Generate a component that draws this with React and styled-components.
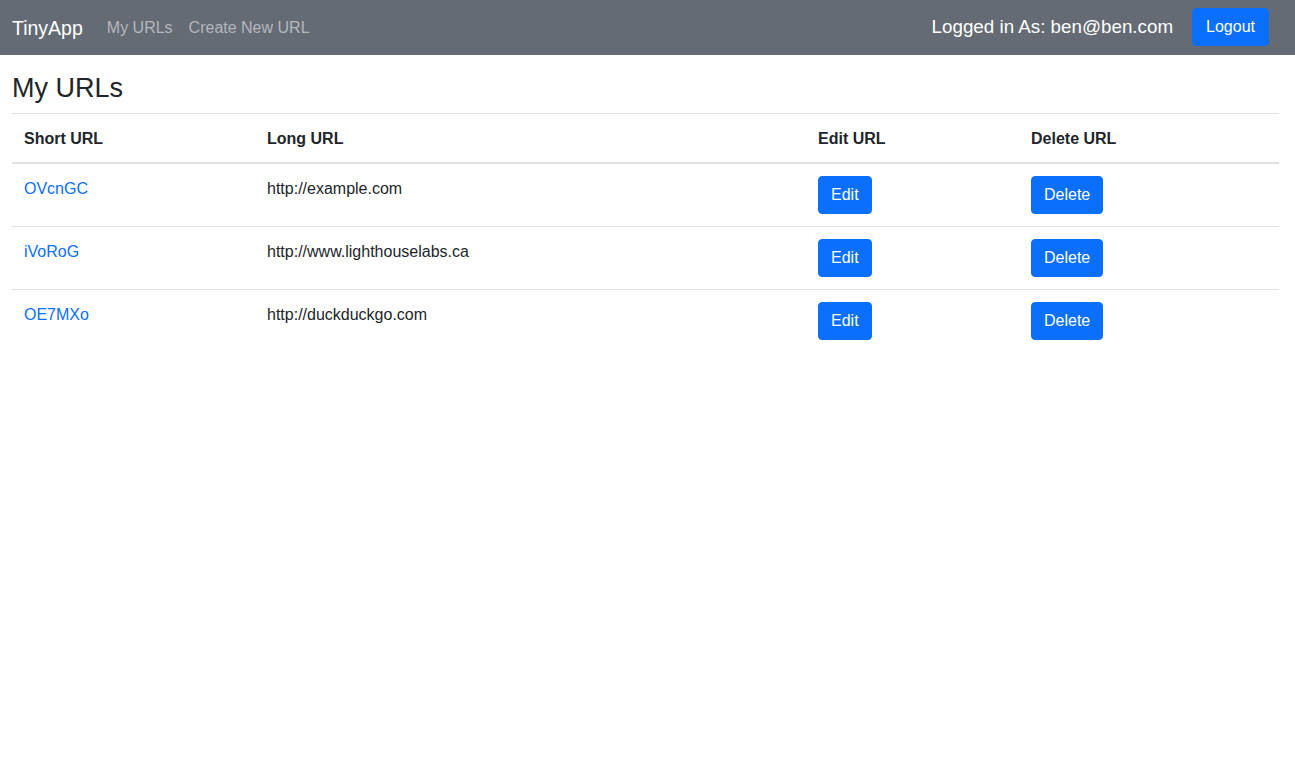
import React from "react";
import styled, { createGlobalStyle } from "styled-components";

const GlobalStyle = createGlobalStyle`
  html, body { margin: 0; padding: 0; background: #fff; }
  body {
    font-family: "Liberation Sans", Arial, sans-serif;
    font-size: 16px;
    line-height: 1.5;
    color: #212529;
  }
  * { box-sizing: border-box; }
`;

const Navbar = styled.nav`
  height: 55px;
  background: #656b74;
  display: flex;
  align-items: center;
  padding: 0 26px 2px 12px;
`;

const Brand = styled.a`
  font-size: 19.5px;
  color: #fff;
  text-decoration: none;
  margin-right: 16px;
  line-height: 30px;
  padding-top: 2px;
`;

const NavLink = styled.a`
  color: #b3b7bc;
  text-decoration: none;
  padding: 10px 8px 8px;
  font-size: 16px;
`;

const Spacer = styled.div`
  flex: 1;
`;

const UserText = styled.span`
  color: #fff;
  font-size: 18.8px;
  margin-right: 19px;
  padding-top: 2px;
`;

const Button = styled.button`
  font-family: inherit;
  font-size: 16px;
  line-height: 24px;
  padding: 6px ${(p) => (p.$wide ? "13px" : "12px")};
  color: #fff;
  background: #0a6ffb;
  border: 1px solid #0a6ffb;
  border-radius: 4px;
  cursor: pointer;
`;

const Main = styled.main`
  padding: 0 16px 0 12px;
`;

const Title = styled.h1`
  font-size: 27px;
  font-weight: 400;
  line-height: 34px;
  margin: 16px 0 8px;
`;

const Table = styled.table`
  width: 100%;
  border-collapse: collapse;
  table-layout: fixed;
`;

const Th = styled.th`
  text-align: left;
  font-weight: 700;
  padding: 13px 12px 11px;
  border-top: 1px solid #dee2e6;
  border-bottom: 2px solid #dee2e6;
  vertical-align: bottom;
`;

const Td = styled.td`
  padding: 12px;
  border-top: 1px solid #dee2e6;
  vertical-align: top;
`;

const CellText = styled.div`
  padding-top: 1px;
`;

const ShortLink = styled.a`
  color: #0a6ffb;
  text-decoration: none;
`;

const urls = [
  { id: "OVcnGC", long: "http://example.com" },
  { id: "iVoRoG", long: "http://www.lighthouselabs.ca" },
  { id: "OE7MXo", long: "http://duckduckgo.com" },
];

export default function App() {
  return (
    <>
      <GlobalStyle />
      <Navbar>
        <Brand href="#">TinyApp</Brand>
        <NavLink href="#">My URLs</NavLink>
        <NavLink href="#">Create New URL</NavLink>
        <Spacer />
        <UserText>Logged in As: ben@ben.com</UserText>
        <Button $wide>Logout</Button>
      </Navbar>
      <Main>
        <Title>My URLs</Title>
        <Table>
          <colgroup>
            <col style={{ width: "243px" }} />
            <col style={{ width: "551px" }} />
            <col style={{ width: "213px" }} />
            <col />
          </colgroup>
          <thead>
            <tr>
              <Th>Short URL</Th>
              <Th>Long URL</Th>
              <Th>Edit URL</Th>
              <Th>Delete URL</Th>
            </tr>
          </thead>
          <tbody>
            {urls.map((u) => (
              <tr key={u.id}>
                <Td>
                  <CellText>
                    <ShortLink href="#">{u.id}</ShortLink>
                  </CellText>
                </Td>
                <Td>
                  <CellText>{u.long}</CellText>
                </Td>
                <Td>
                  <Button>Edit</Button>
                </Td>
                <Td>
                  <Button>Delete</Button>
                </Td>
              </tr>
            ))}
          </tbody>
        </Table>
      </Main>
    </>
  );
}
